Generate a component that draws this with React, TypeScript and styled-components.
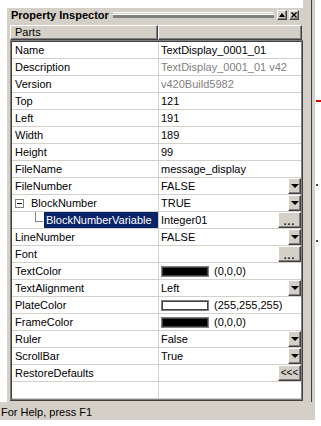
import React from 'react';
import styled, { createGlobalStyle, css } from 'styled-components';

const GlobalStyle = createGlobalStyle`
  html, body {
    margin: 0;
    padding: 0;
    background: #fff;
  }
  body {
    font-family: 'Liberation Sans', Arial, sans-serif;
    font-size: 11px;
    color: #000;
  }
`;

const FACE = '#d4d0c8';
const SHADOW = '#808080';
const DARK = '#404040';
const LINE = '#d4d0c8';

const raised = css`
  border: 1px solid;
  border-color: #fff ${DARK} ${DARK} #fff;
  box-shadow: inset -1px -1px 0 ${SHADOW};
  box-sizing: border-box;
  background: ${FACE};
`;

// frame
const Screen = styled.div`
  width: 321px;
  height: 426px;
  display: flex;
  flex-direction: column;
  overflow: hidden;
  background: #fff;
`;

const Workspace = styled.div`
  display: flex;
  height: 402px;
`;

const Gutter = styled.div`
  width: 7px;
`;

const Dock = styled.div`
  width: 296px;
  margin-top: 8px;
  padding-left: 3px;
  box-sizing: border-box;
  background: ${FACE};
  display: flex;
  flex-direction: column;
`;

const Splitter = styled.div`
  width: 12px;
  background: linear-gradient(
    to right,
    ${FACE} 8px,
    ${DARK} 8px,
    ${DARK} 9px,
    ${FACE} 9px
  );
`;

const Canvas = styled.div`
  flex: 1;
  position: relative;
`;

const Mark = styled.div<{ $top: number; $color: string; $w: number }>`
  position: absolute;
  left: 1px;
  top: ${({ $top }) => $top}px;
  width: ${({ $w }) => $w}px;
  height: 2px;
  background: ${({ $color }) => $color};
`;

// caption
const TitleBar = styled.div`
  height: 14px;
  display: flex;
  align-items: center;
  padding: 0 4px 0 1px;
`;

const Title = styled.span`
  font-weight: bold;
  white-space: nowrap;
`;

const Grip = styled.div`
  flex: 1;
  height: 6px;
  margin: 0 3px 0 4px;
  border-top: 1px solid #fff;
  border-bottom: 1px solid ${SHADOW};
  box-shadow: 0 -2px 0 0 ${SHADOW} inset, 0 -3px 0 0 #fff inset;
  box-sizing: border-box;
`;

const CaptionButton = styled.div`
  ${raised};
  width: 10px;
  height: 10px;
  display: flex;
  align-items: center;
  justify-content: center;
  & + & {
    margin-left: 2px;
  }
`;

const Header = styled.div`
  margin-top: 3px;
  height: 15px;
  display: flex;
  margin-right: 1px;
`;

const HeaderCell = styled.div<{ $width?: number }>`
  ${raised};
  height: 15px;
  line-height: 13px;
  padding-left: 4px;
  ${({ $width }) => ($width ? `width: ${$width}px;` : 'flex: 1;')}
`;

// grid
const GridFrame = styled.div`
  border: 1px solid;
  border-color: ${SHADOW} ${DARK} ${DARK} ${SHADOW};
  background: #fff;
`;

const GridInner = styled.div`
  border-left: 1px solid ${DARK};
  border-top: 1px solid ${DARK};
  border-right: 1px solid ${SHADOW};
  border-bottom: 1px solid ${SHADOW};
`;

const Row = styled.div`
  display: flex;
  height: 17px;
  border-bottom: 1px solid ${LINE};
  box-sizing: border-box;
`;

const NameCell = styled.div`
  width: 147px;
  flex: none;
  display: flex;
  align-items: center;
  border-right: 1px solid ${LINE};
  box-sizing: border-box;
  padding-left: 3px;
  white-space: nowrap;
`;

const Expander = styled.div`
  width: 9px;
  height: 9px;
  border: 1px solid ${SHADOW};
  box-sizing: border-box;
  display: flex;
  align-items: center;
  justify-content: center;
  margin-right: 7px;
  &::after {
    content: '';
    width: 5px;
    height: 1px;
    background: #000;
  }
`;

const TreeLine = styled.div`
  width: 9px;
  height: 16px;
  margin-left: 20px;
  position: relative;
  flex: none;
  &::before {
    content: '';
    position: absolute;
    left: 0;
    top: 0;
    height: 9px;
    border-left: 1px solid ${SHADOW};
  }
  &::after {
    content: '';
    position: absolute;
    left: 0;
    top: 9px;
    width: 8px;
    border-top: 1px solid ${SHADOW};
  }
`;

const Selected = styled.div`
  flex: 1;
  align-self: stretch;
  background: #0a246a;
  color: #fff;
  padding-left: 2px;
  display: flex;
  align-items: center;
`;

const ValueCell = styled.div<{ $muted?: boolean }>`
  flex: 1;
  display: flex;
  align-items: center;
  padding-left: 2px;
  white-space: nowrap;
  color: ${({ $muted }) => ($muted ? SHADOW : '#000')};
  min-width: 0;
`;

const ValueText = styled.span`
  flex: 1;
`;

const CellButton = styled.div<{ $wide?: boolean }>`
  ${raised};
  width: ${({ $wide }) => ($wide ? 23 : 13)}px;
  height: 16px;
  align-self: flex-start;
  display: flex;
  align-items: center;
  justify-content: center;
  font-size: 10px;
  line-height: 1;
  color: #000;
  flex: none;
`;

const Arrow = styled.div`
  width: 0;
  height: 0;
  border-left: 4px solid transparent;
  border-right: 4px solid transparent;
  border-top: 4px solid #000;
`;

const Dots = styled.span`
  font-weight: bold;
  letter-spacing: 1px;
  margin-top: 4px;
`;

const Swatch = styled.div<{ $color: string }>`
  width: 48px;
  height: 11px;
  box-sizing: border-box;
  border: 1px solid ${SHADOW};
  background: ${({ $color }) => $color};
  box-shadow: inset 0 0 0 1px ${DARK};
  margin-right: 5px;
  flex: none;
`;

const StatusBar = styled.div`
  width: 315px;
  height: 18px;
  background: ${FACE};
  padding-left: 1px;
  padding-top: 2px;
  display: flex;
  align-items: center;
  box-sizing: border-box;
`;

type Kind = 'text' | 'muted' | 'drop' | 'more' | 'color' | 'restore' | 'empty';

interface Prop {
  name: string;
  value?: string;
  kind: Kind;
  color?: string;
  tree?: 'parent' | 'child';
}

const props: Prop[] = [
  { name: 'Name', value: 'TextDisplay_0001_01', kind: 'text' },
  { name: 'Description', value: 'TextDisplay_0001_01 v42', kind: 'muted' },
  { name: 'Version', value: 'v420Build5982', kind: 'muted' },
  { name: 'Top', value: '121', kind: 'text' },
  { name: 'Left', value: '191', kind: 'text' },
  { name: 'Width', value: '189', kind: 'text' },
  { name: 'Height', value: '99', kind: 'text' },
  { name: 'FileName', value: 'message_display', kind: 'text' },
  { name: 'FileNumber', value: 'FALSE', kind: 'drop' },
  { name: 'BlockNumber', value: 'TRUE', kind: 'drop', tree: 'parent' },
  { name: 'BlockNumberVariable', value: 'Integer01', kind: 'more', tree: 'child' },
  { name: 'LineNumber', value: 'FALSE', kind: 'drop' },
  { name: 'Font', value: '', kind: 'more' },
  { name: 'TextColor', value: '(0,0,0)', kind: 'color', color: '#000' },
  { name: 'TextAlignment', value: 'Left', kind: 'drop' },
  { name: 'PlateColor', value: '(255,255,255)', kind: 'color', color: '#fff' },
  { name: 'FrameColor', value: '(0,0,0)', kind: 'color', color: '#000' },
  { name: 'Ruler', value: 'False', kind: 'drop' },
  { name: 'ScrollBar', value: 'True', kind: 'drop' },
  { name: 'RestoreDefaults', value: '', kind: 'restore' },
  { name: '', kind: 'empty' },
];

const Name = ({ item }: { item: Prop }) => {
  if (item.tree === 'child') {
    return (
      <NameCell>
        <TreeLine />
        <Selected>{item.name}</Selected>
      </NameCell>
    );
  }
  return (
    <NameCell>
      {item.tree === 'parent' && <Expander />}
      {item.name}
    </NameCell>
  );
};

const Value = ({ item }: { item: Prop }) => (
  <ValueCell $muted={item.kind === 'muted'}>
    {item.kind === 'color' && <Swatch $color={item.color!} />}
    <ValueText>{item.value}</ValueText>
    {item.kind === 'drop' && (
      <CellButton>
        <Arrow />
      </CellButton>
    )}
    {item.kind === 'more' && (
      <CellButton $wide>
        <Dots>...</Dots>
      </CellButton>
    )}
    {item.kind === 'restore' && <CellButton $wide>&lt;&lt;&lt;</CellButton>}
  </ValueCell>
);

const App = () => (
  <Screen>
    <GlobalStyle />
    <Workspace>
      <Gutter />
      <Dock>
        <TitleBar>
          <Title>Property Inspector</Title>
          <Grip />
          <CaptionButton>
            <svg width="6" height="4" viewBox="0 0 6 4">
              <path d="M3 0 L6 4 L0 4 Z" fill="#000" />
            </svg>
          </CaptionButton>
          <CaptionButton>
            <svg width="6" height="6" viewBox="0 0 6 6">
              <path d="M0.5 0.5 L5.5 5.5 M5.5 0.5 L0.5 5.5" stroke="#000" strokeWidth="1.4" />
            </svg>
          </CaptionButton>
        </TitleBar>
        <Header>
          <HeaderCell $width={148}>Parts</HeaderCell>
          <HeaderCell />
        </Header>
        <GridFrame>
          <GridInner>
            {props.map((item, i) => (
              <Row key={i}>
                <Name item={item} />
                <Value item={item} />
              </Row>
            ))}
          </GridInner>
        </GridFrame>
      </Dock>
      <Splitter />
      <Canvas>
        <Mark $top={100} $color="#e00000" $w={6} />
        <Mark $top={184} $color="#404040" $w={2} />
        <Mark $top={240} $color="#404040" $w={2} />
      </Canvas>
    </Workspace>
    <StatusBar>For Help, press F1</StatusBar>
  </Screen>
);

export default App;
